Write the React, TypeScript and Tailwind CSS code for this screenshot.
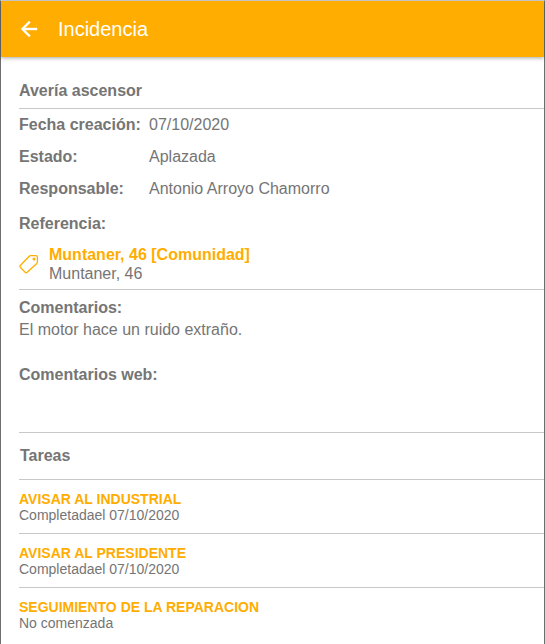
import React from 'react';

const details = [
  { label: 'Fecha creación:', value: '07/10/2020' },
  { label: 'Estado:', value: 'Aplazada' },
  { label: 'Responsable:', value: 'Antonio Arroyo Chamorro' },
];

const tasks = [
  { title: 'AVISAR AL INDUSTRIAL', status: 'Completadael 07/10/2020' },
  { title: 'AVISAR AL PRESIDENTE', status: 'Completadael 07/10/2020' },
  { title: 'SEGUIMIENTO DE LA REPARACION', status: 'No comenzada' },
];

function ArrowBack() {
  return (
    <svg viewBox="0 0 24 24" className="size-6" fill="currentColor" stroke="currentColor" strokeWidth="0.4" aria-hidden="true">
      <path d="M20 11H7.83l5.59-5.59L12 4l-8 8 8 8 1.41-1.41L7.83 13H20v-2z" />
    </svg>
  );
}

function TagIcon() {
  return (
    <svg viewBox="0 0 20 20" className="size-5 shrink-0" fill="none" stroke="currentColor" aria-hidden="true">
      <path
        d="M11.6 1.6h5.2a1.6 1.6 0 0 1 1.6 1.6v4.8a2 2 0 0 1-.6 1.4l-9.9 9a1.2 1.2 0 0 1-1.7 0l-4.9-5.2a1.2 1.2 0 0 1 0-1.7l8.9-9.3a2 2 0 0 1 1.4-.6z"
        strokeWidth="1.3"
        strokeLinejoin="round"
      />
      <circle cx="15" cy="5" r="1.5" fill="currentColor" stroke="none" />
    </svg>
  );
}

function Header() {
  return (
    <header className="flex h-14 items-center gap-[17px] bg-[#ffad00] px-4 text-white shadow-[0_1px_4px_rgba(0,0,0,0.35)]">
      <button type="button" aria-label="Volver">
        <ArrowBack />
      </button>
      <h1 className="text-xl">Incidencia</h1>
    </header>
  );
}

export default function App() {
  return (
    <div className="min-h-screen border-x border-t border-x-[#6e6e6e] border-t-[#d6d6d6] bg-white font-['Liberation_Sans',Arial,sans-serif] text-base text-[#757575]">
      <Header />
      <main className="pl-[18px]">
        <h2 className="border-b border-[#c8c8c8] pt-[22px] pb-[5px] font-bold">Avería ascensor</h2>

        <section className="border-b border-[#c8c8c8] pb-[6px]">
          <dl>
            {details.map((item) => (
              <div key={item.label} className="flex leading-8">
                <dt className="w-[130px] shrink-0 font-bold">{item.label}</dt>
                <dd>{item.value}</dd>
              </div>
            ))}
          </dl>
          <h3 className="pt-[7px] font-bold">Referencia:</h3>
          <div className="flex items-center gap-[10px] pt-[9px] leading-[19px]">
            <span className="text-[#ffad00]">
              <TagIcon />
            </span>
            <div>
              <a href="#comunidad" className="block font-bold text-[#ffad00]">
                Muntaner, 46 [Comunidad]
              </a>
              <p>Muntaner, 46</p>
            </div>
          </div>
        </section>

        <section className="border-b border-[#c8c8c8] pt-[7px] leading-[22px]">
          <h3 className="font-bold">Comentarios:</h3>
          <p>El motor hace un ruido extraño.</p>
          <h3 className="pt-[23px] pb-[46px] font-bold">Comentarios web:</h3>
        </section>

        <section>
          <h2 className="border-b border-[#c8c8c8] py-[11px] pl-px font-bold">Tareas</h2>
          <ul>
            {tasks.map((task) => (
              <li
                key={task.title}
                className="border-b border-[#c8c8c8] pt-[11px] pb-[10px] text-sm leading-4 last:border-b-0"
              >
                <a href="#tarea" className="block font-bold text-[#ffad00]">
                  {task.title}
                </a>
                <p>{task.status}</p>
              </li>
            ))}
          </ul>
        </section>
      </main>
    </div>
  );
}
